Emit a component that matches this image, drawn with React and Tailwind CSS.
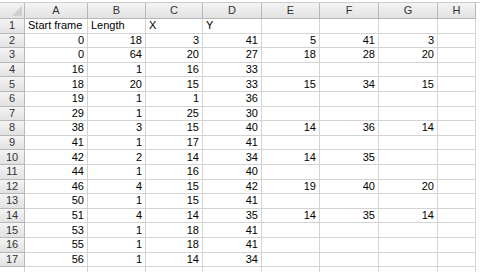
const COLS = ['A', 'B', 'C', 'D', 'E', 'F', 'G', 'H'];

const ROWS = [
  ['Start frame', 'Length', 'X', 'Y', '', '', '', ''],
  [0, 18, 3, 41, 5, 41, 3],
  [0, 64, 20, 27, 18, 28, 20],
  [16, 1, 16, 33],
  [18, 20, 15, 33, 15, 34, 15],
  [19, 1, 1, 36],
  [29, 1, 25, 30],
  [38, 3, 15, 40, 14, 36, 14],
  [41, 1, 17, 41],
  [42, 2, 14, 34, 14, 35],
  [44, 1, 16, 40],
  [46, 4, 15, 42, 19, 40, 20],
  [50, 1, 15, 41],
  [51, 4, 14, 35, 14, 35, 14],
  [53, 1, 18, 41],
  [55, 1, 18, 41],
  [56, 1, 14, 34],
];

const grid = 'grid grid-cols-[25px_63px_58px_57px_59px_58px_59px_59px_38px]';

function HeaderCell({ children, corner }) {
  return (
    <div className="relative flex items-center justify-center bg-gradient-to-b from-[#f4f4f4] to-[#e2e2e2] border-r border-b border-[#b8b8b8] text-[#333] overflow-hidden">
      {children}
      {corner && (
        <div className="absolute right-[2px] bottom-[2px] w-0 h-0 border-l-[10px] border-l-transparent border-b-[10px] border-b-[#cfcfcf]" />
      )}
    </div>
  );
}

function Cell({ value }) {
  const isNum = typeof value === 'number';
  return (
    <div
      className={
        'flex items-center border-r border-b border-[#d4d4d4] overflow-hidden whitespace-nowrap px-[3px] ' +
        (isNum ? 'justify-end' : 'justify-start')
      }
    >
      {value === undefined ? '' : value}
    </div>
  );
}

export default function App() {
  return (
    <div className="w-[480px] h-[272px] bg-white overflow-hidden pt-[2px] text-[11px] leading-none text-black font-['Liberation_Sans',Arial,sans-serif]">
      <div className="border-t border-[#cdcdcd]">
        <div className={grid + ' h-[16px]'}>
          <HeaderCell corner />
          {COLS.map((c) => (
            <HeaderCell key={c}>{c}</HeaderCell>
          ))}
        </div>

        {ROWS.map((row, i) => (
          <div key={i} className={grid + ' h-[14.6px]'}>
            <HeaderCell>{i + 1}</HeaderCell>
            {COLS.map((c, j) => (
              <Cell key={c} value={row[j]} />
            ))}
          </div>
        ))}

        {/* partial next row */}
        <div className={grid + ' h-[14px]'}>
          <div className="border-r border-[#d4d4d4]" />
          {COLS.map((c) => (
            <div key={c} className="border-r border-[#d4d4d4]" />
          ))}
        </div>
      </div>
    </div>
  );
}
